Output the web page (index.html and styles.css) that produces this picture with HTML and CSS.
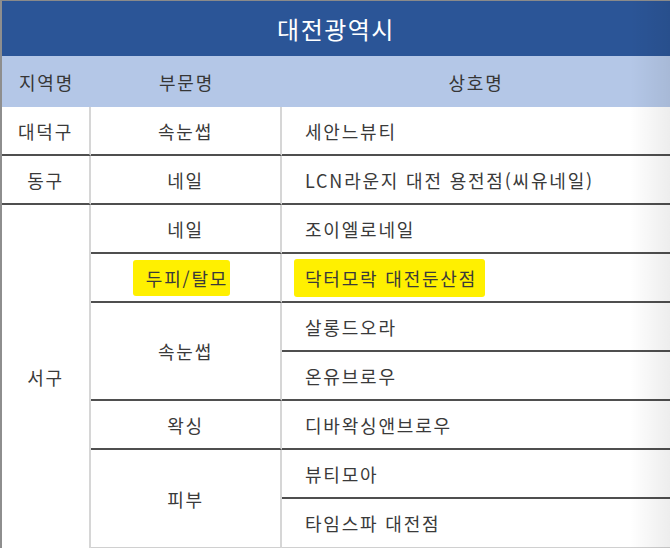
FILE: index.html
```html
<!DOCTYPE html>
<html lang="ko">
<head>
<meta charset="utf-8">
<link rel="stylesheet" href="styles.css">
</head>
<body>
<div class="board">
  <div class="title">대전광역시</div>
  <div class="grid">
    <div class="hd">지역명</div>
    <div class="hd">부문명</div>
    <div class="hd">상호명</div>

    <div class="c1">대덕구</div>
    <div class="c2">속눈썹</div>
    <div class="c3">세안느뷰티</div>

    <div class="c1">동구</div>
    <div class="c2">네일</div>
    <div class="c3">LCN라운지 대전 용전점(씨유네일)</div>

    <div class="c1 span7">서구</div>
    <div class="c2">네일</div>
    <div class="c3">조이엘로네일</div>
    <div class="c2"><span class="mark mark-a">두피/탈모</span></div>
    <div class="c3"><span class="mark mark-b">닥터모락 대전둔산점</span></div>
    <div class="c2 span2">속눈썹</div>
    <div class="c3">살롱드오라</div>
    <div class="c3">온유브로우</div>
    <div class="c2">왁싱</div>
    <div class="c3">디바왁싱앤브로우</div>
    <div class="c2 span2 last">피부</div>
    <div class="c3">뷰티모아</div>
    <div class="c3 last">타임스파 대전점</div>
  </div>
</div>
</body>
</html>
```
FILE: styles.css
```css
html, body {
  margin: 0;
  padding: 0;
  background: #ffffff;
}
body {
  font-family: "Noto Sans CJK KR", "Noto Sans", sans-serif;
  color: #3a3a3a;
}
.board {
  position: relative;
  width: 670px;
  height: 548px;
  box-sizing: border-box;
  border-left: 2px solid #8e8e8e;
  border-top: 1px solid #8a8a8a;
  overflow: hidden;
}
.board::after {
  content: "";
  position: absolute;
  top: 0;
  right: 0;
  width: 40px;
  height: 100%;
  background: linear-gradient(to right, rgba(0,0,0,0), rgba(0,0,0,0.07));
  pointer-events: none;
}
.title {
  height: 55px;
  background: #2b5597;
  color: #ffffff;
  font-size: 24px;
  letter-spacing: 1.5px;
  display: flex;
  align-items: center;
  justify-content: center;
}
.grid {
  display: grid;
  grid-template-columns: 89px 191px 1fr;
  grid-template-rows: 51px repeat(9, 49px);
}
.hd {
  background: #b4c7e7;
  font-size: 18px;
  letter-spacing: 1.8px;
  display: flex;
  align-items: center;
  justify-content: center;
  color: #363636;
}
.c1, .c2, .c3 {
  box-sizing: border-box;
  border-bottom: 2px solid #4f4f4f;
  font-size: 18px;
  letter-spacing: 1.8px;
  display: flex;
  align-items: center;
}
.c1, .c2 {
  justify-content: center;
  border-right: 2px solid #d6d6d6;
}
.c3 {
  padding-left: 23px;
}
.span7 {
  grid-row: span 7;
  border-bottom: none;
}
.span2 {
  grid-row: span 2;
}
.last {
  border-bottom: 1px solid #d0d0d0;
}
.mark {
  background: #fff000;
  border-radius: 3px;
}
.mark-a {
  padding: 5px 2px 5px 13px;
  margin-left: -8px;
}
.mark-b {
  padding: 6px 8px 6px 11px;
  margin-left: -11px;
}
```
